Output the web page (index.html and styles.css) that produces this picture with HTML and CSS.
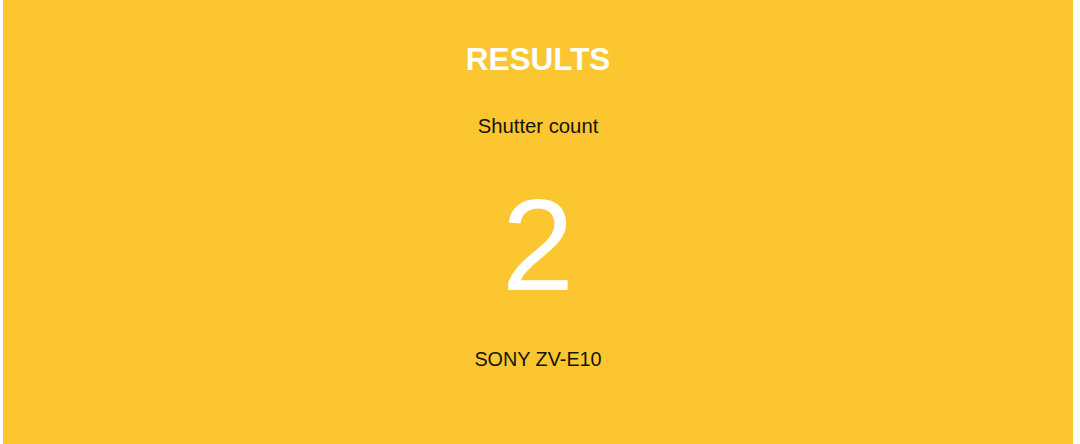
FILE: index.html
```html
<!DOCTYPE html>
<html lang="en">
<head>
<meta charset="utf-8">
<title>Results</title>
<link rel="stylesheet" href="styles.css">
</head>
<body>
<main class="panel">
  <h1 class="panel-title">RESULTS</h1>
  <p class="label">Shutter count</p>
  <p class="count">2</p>
  <p class="model">SONY ZV-E10</p>
</main>
</body>
</html>
```
FILE: styles.css
```css
html, body {
  margin: 0;
  padding: 0;
  background: #ffffff;
}

.panel {
  box-sizing: border-box;
  height: 444px;
  margin: 0 7px 0 3px;
  padding-top: 41px;
  background: #fbc62f;
  display: flex;
  flex-direction: column;
  align-items: center;
  font-family: "Liberation Sans", Arial, Helvetica, sans-serif;
  color: #16140e;
}

.panel-title {
  margin: 0;
  font-size: 31.5px;
  line-height: 36px;
  font-weight: 700;
  color: #ffffff;
}

.label {
  margin: 37px 0 0;
  font-size: 20.3px;
  line-height: 24px;
}

.count {
  margin: 41px 0 0;
  font-size: 130px;
  line-height: 132px;
  font-weight: 400;
  color: #ffffff;
}

.model {
  margin: 36px 0 0;
  font-size: 19.8px;
  line-height: 24px;
}
```
